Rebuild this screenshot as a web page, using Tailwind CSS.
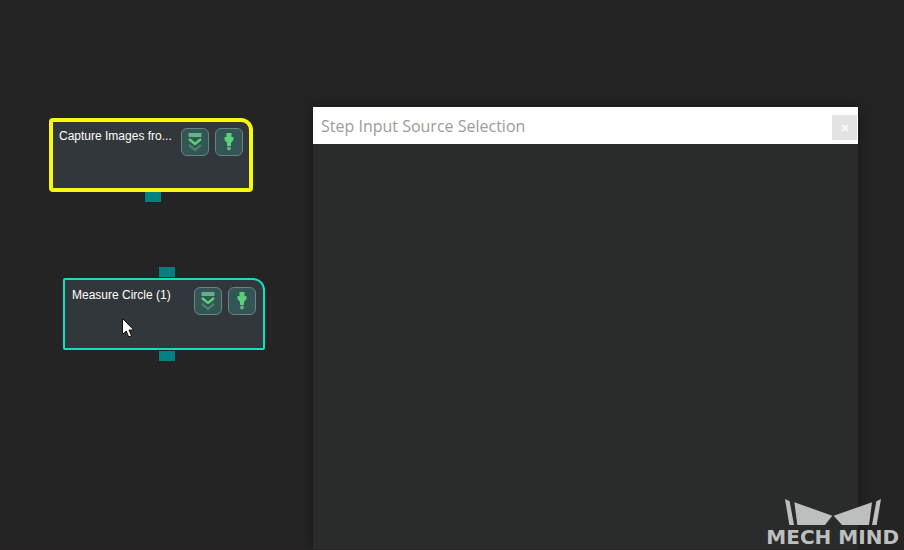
<!DOCTYPE html>
<html lang="en">
  <head>
    <meta charset="UTF-8" />
    <meta name="viewport" content="width=device-width, initial-scale=1.0" />
    <title>Step Input Source Selection</title>
    <script src="https://cdn.jsdelivr.net/npm/@tailwindcss/browser@4"></script>
  </head>

  <body class="bg-[#242424]">
    <svg class="hidden">
      <symbol id="icon-expand" viewBox="0 0 28 28">
        <rect x="7.5" y="5" width="13" height="4" fill="#62b286" />
        <path d="M8 11l6 5 6-5" fill="none" stroke="#5bd177" stroke-width="2.4" />
        <path d="M8 17l6 5 6-5" fill="none" stroke="#458368" stroke-width="2.4" />
      </symbol>
      <symbol id="icon-run" viewBox="0 0 28 28">
        <path d="M11.500 5h5v4h2v3L16 15v3h-4v-3l-2.500-3V9h2z" fill="#5bd177" />
        <circle cx="14" cy="20.500" r="2" fill="#62b286" />
      </symbol>
    </svg>

    <main class="relative min-h-screen overflow-hidden border-b border-[#2c1e25]">
      <!-- Step: capture images -->
      <section class="absolute left-[49px] top-[118px] w-[204px]">
        <div class="flex h-[74px] items-start gap-1.5 rounded-sm rounded-tr-xl border-4 border-[#f8f80a] bg-[#32373b] p-1.5">
          <h2 class="min-w-0 flex-1 whitespace-nowrap font-['Liberation_Sans',Arial,sans-serif] text-xs text-white">Capture Images fro...</h2>
          <button type="button" aria-label="Expand" class="size-7 shrink-0 rounded-md border border-[#67857f] bg-[#335555]">
            <svg class="-m-px size-7"><use href="#icon-expand" /></svg>
          </button>
          <button type="button" aria-label="Run" class="size-7 shrink-0 rounded-md border border-[#67857f] bg-[#335555]">
            <svg class="-m-px size-7"><use href="#icon-run" /></svg>
          </button>
        </div>
        <div class="ml-24 h-2.5 w-4 bg-[#008080]"></div>
      </section>

      <!-- Step: measure circle -->
      <section class="absolute left-[63px] top-[267px] w-[202px]">
        <div class="mb-px ml-24 h-2.5 w-4 bg-[#008080]"></div>
        <div class="flex h-[72px] items-start gap-1.5 rounded-xs rounded-tr-xl border-2 border-[#12dfbd] bg-[#32373b] p-[7px]">
          <h2 class="min-w-0 flex-1 whitespace-nowrap font-['Liberation_Sans',Arial,sans-serif] text-xs text-white">Measure Circle (1)</h2>
          <button type="button" aria-label="Expand" class="size-7 shrink-0 rounded-md border border-[#67857f] bg-[#335555]">
            <svg class="-m-px size-7"><use href="#icon-expand" /></svg>
          </button>
          <button type="button" aria-label="Run" class="size-7 shrink-0 rounded-md border border-[#67857f] bg-[#335555]">
            <svg class="-m-px size-7"><use href="#icon-run" /></svg>
          </button>
        </div>
        <div class="ml-24 mt-px h-2.5 w-4 bg-[#008080]"></div>
      </section>

      <!-- Mouse pointer -->
      <svg class="absolute left-[122px] top-[318px] h-5 w-3" viewBox="0 0 12 20">
        <path d="M.5.5v16l3.700-3.500 2.500 6 2.800-1.200-2.500-5.800h4.800z" fill="#fff" stroke="#111" />
      </svg>

      <!-- Dialog -->
      <section class="absolute bottom-0 left-[313px] right-[46px] top-[107px] flex flex-col bg-[#2a2c2b] shadow-[0_0_12px_#00000066]">
        <header class="flex h-[37px] items-center justify-between bg-white pl-2 pr-px">
          <h1 class="font-['Open_Sans',sans-serif] text-base text-[#9b9b9b]">Step Input Source Selection</h1>
          <button type="button" aria-label="Close" class="mt-1 flex size-[25px] items-center justify-center bg-[#e3e3e3]">
            <svg class="size-2" viewBox="0 0 8 8"><path d="M1 1l6 6M7 1L1 7" stroke="#f1f8fa" stroke-width="2" /></svg>
          </button>
        </header>
      </section>

      <!-- Watermark -->
      <div class="absolute bottom-0 right-[5px] flex flex-col items-center text-[#bdbfbf]">
        <svg class="h-[26px] w-24" viewBox="0 0 288 78" fill="currentColor">
          <path d="M0 0l14 7 13 71H13zM28 10l114 40-22 28H37zM146 50l115-40-9 68h-81zM288 0l-14 7-13 71h14z" />
        </svg>
        <span class="whitespace-nowrap font-['DejaVu_Sans',sans-serif] text-xl font-bold leading-6">MECH MIND</span>
      </div>
    </main>
  </body>
</html>
